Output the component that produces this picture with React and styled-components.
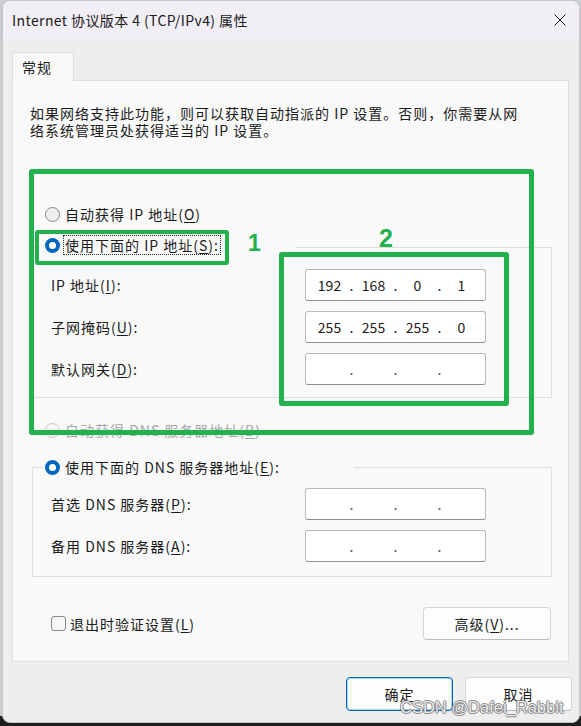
import React from 'react';
import styled, { createGlobalStyle, css } from 'styled-components';

const GlobalStyle = createGlobalStyle`
  html, body { margin: 0; padding: 0; }
  body {
    width: 581px;
    height: 726px;
    overflow: hidden;
    background: linear-gradient(to bottom, #c9cdd2 0, #c9cdd2 716px, #1e1e1e 716px);
    font-family: "Noto Sans CJK SC", "Noto Sans", sans-serif;
    color: #1a1a1a;
  }
`;

const Stage = styled.div`
  position: relative;
  width: 581px;
  height: 726px;
  padding-left: 2px;
  box-sizing: border-box;
`;

const Window = styled.div`
  width: 578px;
  height: 723px;
  box-sizing: border-box;
  border: 1px solid #c4c4c4;
  border-radius: 8px;
  overflow: hidden;
  background: #eeeeee;
  display: flex;
  flex-direction: column;
`;

const TitleBar = styled.div`
  height: 38px;
  flex: none;
  display: flex;
  align-items: center;
  justify-content: space-between;
  padding: 0 13px 0 9px;
  background: #f2eef6;
  font-size: 14px;
  letter-spacing: 0.4px;
`;

const Content = styled.div`
  padding: 13px 10px 0 9px;
  display: flex;
  flex-direction: column;
`;

const Tab = styled.div`
  width: 62px;
  height: 29px;
  box-sizing: border-box;
  border: 1px solid #dcdcdc;
  border-bottom: none;
  border-radius: 2px 2px 0 0;
  background: #f9f9f9;
  padding-left: 9px;
  display: flex;
  align-items: center;
  font-size: 14px;
  letter-spacing: 1px;
  position: relative;
  z-index: 1;
  margin-bottom: -1px;
`;

const Panel = styled.div`
  border: 1px solid #dfdfdf;
  background: #f9f9f9;
  padding: 24px 16px 21px 17px;
  display: flex;
  flex-direction: column;
  font-size: 14px;
  letter-spacing: 1px;
`;

const Desc = styled.div`
  line-height: 17px;
  white-space: nowrap;
`;

const U = styled.span`
  text-decoration: underline;
  text-underline-offset: 2px;
  text-decoration-thickness: 1px;
`;

const RadioRow = styled.div`
  display: flex;
  align-items: center;
  gap: 5px;
  height: 20px;
  padding-left: 15px;
  margin-top: ${p => p.$mt}px;
  color: ${p => (p.$disabled ? '#a6a6a6' : 'inherit')};
`;

const RadioDot = styled.span`
  width: 15px;
  height: 15px;
  border-radius: 50%;
  box-sizing: border-box;
  flex: none;
  position: relative;
  ${p =>
    p.$checked
      ? css`
          background: #0067c0;
          &::after {
            content: '';
            position: absolute;
            left: 4px;
            top: 4px;
            width: 7px;
            height: 7px;
            border-radius: 50%;
            background: #ffffff;
          }
        `
      : css`
          border: 1px solid ${p.$disabled ? '#cacaca' : '#868686'};
          background: ${p.$disabled ? '#f6f6f6' : '#efefef'};
        `}
`;

const FocusLabel = styled.span`
  border: 1px dotted #2a2a2a;
  padding: 0 1px;
  margin-left: -2px;
  line-height: 18px;
`;

const Group = styled.div`
  margin-top: ${p => p.$mt}px;
  margin-left: 2px;
  border: 1px solid #dedede;
  padding: 0 65px ${p => p.$pb}px 18px;
`;

const Legend = styled.div`
  display: flex;
  align-items: center;
  gap: 5px;
  width: fit-content;
  height: 20px;
  background: #f9f9f9;
  margin-top: ${p => p.$mt}px;
  margin-left: ${p => p.$ml - 18}px;
  padding: 0 74px 0 ${p => p.$pl}px;
`;

const FieldGrid = styled.div`
  display: grid;
  grid-template-columns: 1fr 181px;
  row-gap: 10px;
  align-items: center;
  margin-top: ${p => p.$mt}px;
`;

const Label = styled.div`
  white-space: nowrap;
`;

const IpField = styled.div`
  height: 32px;
  box-sizing: border-box;
  border: 1px solid #b9b9b9;
  border-bottom-color: #8f8f8f;
  border-radius: 3px;
  background: #ffffff;
  display: flex;
  align-items: center;
  padding-left: 6px;
  letter-spacing: 0;
  font-size: 14px;
`;

const Octet = styled.span`
  width: 35px;
  text-align: center;
`;

const Dot = styled.span`
  width: 9px;
  text-align: center;
  color: ${p => (p.$empty ? '#555' : 'inherit')};
`;

const FooterRow = styled.div`
  display: flex;
  align-items: center;
  justify-content: space-between;
  margin-top: 30px;
  padding: 0 1px 0 21px;
`;

const CheckLabel = styled.label`
  display: flex;
  align-items: center;
  gap: 4px;
`;

const CheckBox = styled.span`
  width: 15px;
  height: 15px;
  box-sizing: border-box;
  border: 1px solid #868686;
  border-radius: 3px;
  background: #f5f5f5;
`;

const Button = styled.button`
  width: ${p => p.$w}px;
  height: ${p => p.$h}px;
  box-sizing: border-box;
  border-radius: 4px;
  background: #fdfdfd;
  font-family: inherit;
  font-size: 14px;
  letter-spacing: 1px;
  color: #1a1a1a;
  padding: 0;
  ${p =>
    p.$primary
      ? css`
          border: 1px solid #0067c0;
          box-shadow: inset 0 0 0 1px rgba(0, 103, 192, 0.3);
        `
      : css`
          border: 1px solid #d5d5d5;
          border-bottom-color: #bdbdbd;
        `}
`;

const DialogButtons = styled.div`
  display: flex;
  justify-content: flex-end;
  gap: 12px;
  margin-top: 15px;
  margin-right: -3px;
`;

const Annot = styled.div`
  position: absolute;
  left: ${p => p.$x}px;
  top: ${p => p.$y}px;
  width: ${p => p.$w}px;
  height: ${p => p.$h}px;
  box-sizing: border-box;
  border: ${p => p.$b}px solid #22b14c;
  border-radius: 3px;
  pointer-events: none;
`;

const AnnotNum = styled.div`
  position: absolute;
  left: ${p => p.$x}px;
  top: ${p => p.$y}px;
  font-family: "Liberation Sans", Arial, sans-serif;
  font-weight: 700;
  font-size: ${p => p.$size}px;
  line-height: ${p => p.$size}px;
  color: #22b14c;
`;

const Watermark = styled.div`
  position: absolute;
  left: 400px;
  top: 698px;
  font-family: "Liberation Sans", Arial, sans-serif;
  font-size: 16.5px;
  color: rgba(248, 248, 248, 0.92);
  text-shadow: 1px 0 0 rgba(110, 110, 110, 0.75), -1px 0 0 rgba(110, 110, 110, 0.75),
    0 1px 0 rgba(110, 110, 110, 0.75), 0 -1px 0 rgba(110, 110, 110, 0.75);
  white-space: nowrap;
  pointer-events: none;
`;

const CloseIcon = () => (
  <svg width="12" height="12" viewBox="0 0 12 12">
    <path d="M0.5 0.5 L11.5 11.5 M11.5 0.5 L0.5 11.5" stroke="#1a1a1a" strokeWidth="1" fill="none" />
  </svg>
);

const IpValue = ({ parts }) => (
  <IpField>
    {parts.map((p, i) => (
      <React.Fragment key={i}>
        <Octet>{p}</Octet>
        {i < 3 && <Dot $empty={!p}>.</Dot>}
      </React.Fragment>
    ))}
  </IpField>
);

const EMPTY = ['', '', '', ''];

export default function App() {
  return (
    <Stage>
      <GlobalStyle />
      <Window>
        <TitleBar>
          <span>Internet 协议版本 4 (TCP/IPv4) 属性</span>
          <CloseIcon />
        </TitleBar>
        <Content>
          <Tab>常规</Tab>
          <Panel>
            <Desc>
              如果网络支持此功能，则可以获取自动指派的 IP 设置。否则，你需要从网
              <br />
              络系统管理员处获得适当的 IP 设置。
            </Desc>

            <RadioRow $mt={65}>
              <RadioDot />
              <span>
                自动获得 IP 地址(<U>O</U>)
              </span>
            </RadioRow>

            <Group $mt={23} $pb={12}>
              <Legend $mt={-13} $ml={7} $pl={5}>
                <RadioDot $checked />
                <FocusLabel>
                  使用下面的 IP 地址(<U>S</U>):
                </FocusLabel>
              </Legend>
              <FieldGrid $mt={14}>
                <Label>
                  IP 地址(<U>I</U>):
                </Label>
                <IpValue parts={['192', '168', '0', '1']} />
                <Label>
                  子网掩码(<U>U</U>):
                </Label>
                <IpValue parts={['255', '255', '255', '0']} />
                <Label>
                  默认网关(<U>D</U>):
                </Label>
                <IpValue parts={EMPTY} />
              </FieldGrid>
            </Group>

            <RadioRow $mt={22} $disabled>
              <RadioDot $disabled />
              <span>
                自动获得 DNS 服务器地址(<U>B</U>)
              </span>
            </RadioRow>

            <Group $mt={27} $pb={14}>
              <Legend $mt={-11} $ml={10} $pl={2}>
                <RadioDot $checked />
                <span>
                  使用下面的 DNS 服务器地址(<U>E</U>):
                </span>
              </Legend>
              <FieldGrid $mt={11}>
                <Label>
                  首选 DNS 服务器(<U>P</U>):
                </Label>
                <IpValue parts={EMPTY} />
                <Label>
                  备用 DNS 服务器(<U>A</U>):
                </Label>
                <IpValue parts={EMPTY} />
              </FieldGrid>
            </Group>

            <FooterRow>
              <CheckLabel>
                <CheckBox />
                <span>
                  退出时验证设置(<U>L</U>)
                </span>
              </CheckLabel>
              <Button $w={128} $h={33}>
                高级(<U>V</U>)...
              </Button>
            </FooterRow>
          </Panel>

          <DialogButtons>
            <Button $w={107} $h={34} $primary>
              确定
            </Button>
            <Button $w={107} $h={34}>
              取消
            </Button>
          </DialogButtons>
        </Content>
      </Window>

      <Annot $x={29} $y={169} $w={505} $h={266} $b={5} />
      <Annot $x={35} $y={230} $w={194} $h={35} $b={4} />
      <Annot $x={279} $y={252} $w={230} $h={154} $b={5} />
      <AnnotNum $x={248} $y={232} $size={23}>1</AnnotNum>
      <AnnotNum $x={379} $y={226} $size={25}>2</AnnotNum>
      <Watermark>CSDN @Dafei_Rabbit</Watermark>
    </Stage>
  );
}
